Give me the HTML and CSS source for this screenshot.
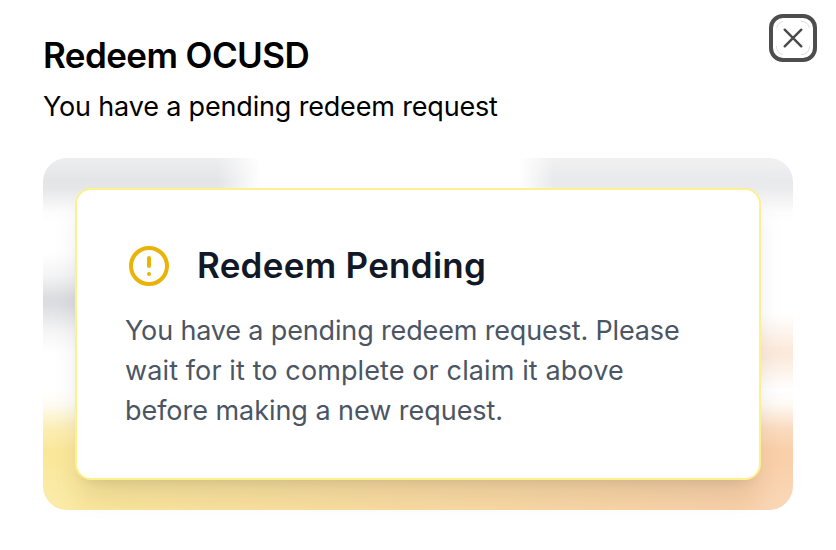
FILE: index.html
```html
<!DOCTYPE html>
<html lang="en">
<head>
<meta charset="utf-8">
<title>Redeem OCUSD</title>
<link rel="stylesheet" href="styles.css">
</head>
<body>
<main class="dialog">
  <button class="close" aria-label="Close">
    <svg width="20" height="20" viewBox="0 0 20 20" fill="none" stroke="currentColor" stroke-width="2.4" stroke-linecap="round"><path d="M1.7 1.7 18.3 18.3M18.3 1.7 1.7 18.3"/></svg>
  </button>
  <header class="header">
    <h1 class="title">Redeem OCUSD</h1>
    <p class="subtitle">You have a pending redeem request</p>
  </header>
  <section class="panel">
    <div class="backdrop">
      <div class="band band-left"></div>
      <div class="band band-right"></div>
      <div class="smudge"></div>
      <div class="peach"></div>
      <div class="action"></div>
    </div>
    <article class="card">
      <div class="card-head">
        <svg class="alert" width="48" height="48" viewBox="0 0 24 24" fill="none" stroke="currentColor" stroke-width="2" stroke-linecap="round"><circle cx="12" cy="12" r="9"/><path d="M12 8v4M12 16h.01"/></svg>
        <h2 class="card-title">Redeem Pending</h2>
      </div>
      <p class="card-text"><span class="line-a">You have a pending redeem request. Please</span><br><span class="line-b">wait for it to complete or claim it above</span><br><span class="line-c">before making a new request.</span></p>
    </article>
  </section>
</main>
</body>
</html>
```
FILE: styles.css
```css
* { box-sizing: border-box; }
body { margin: 0; background: #fff; color: #000; font-family: Inter, "Liberation Sans", sans-serif; }
h1, h2, p { margin: 0; }
.dialog { position: relative; height: 550px; padding: 35px 43px 40px; overflow: hidden; }
.close {
  position: absolute; top: 14px; right: 19px; width: 48px; height: 48px; padding: 0;
  display: grid; place-items: center; color: #4a4a4a; background: #fff;
  border: 4px solid #4d4d4d; border-radius: 14px;
}
.close svg { grid-area: 1 / 1; }
.close::before { content: ""; grid-area: 1 / 1; width: 32px; height: 32px; border: 1px solid #dedede; border-radius: 8px; clip-path: polygon(0 0, 7px 0, 7px 100%, 25px 100%, 25px 0, 100% 0, 100% 7px, 0 7px, 0 25px, 100% 25px, 100% 100%, 0 100%); }
.title { font-size: 35px; line-height: 40px; font-weight: 600; letter-spacing: -0.58px; white-space: nowrap; }
.subtitle { margin-top: 12px; font-size: 27px; line-height: 40px; letter-spacing: -0.17px; white-space: nowrap; }
.panel { display: grid; margin-top: 31px; width: 750px; height: 352px; }
.backdrop { grid-area: 1 / 1; display: grid; grid-template: 352px / 750px; overflow: hidden; border-radius: 24px; background: #fff; }
.backdrop > * { grid-area: 1 / 1; }
.band { height: 64px; background: linear-gradient(#eeeeef 0, #e4e5e7 22px, #e5e6e8 30px, #f3f3f4 44px, #fcfcfc 54px, #fff 64px); }
.band-left { width: 220px; -webkit-mask-image: linear-gradient(90deg, #000 175px, #0007 198px, transparent 218px); mask-image: linear-gradient(90deg, #000 175px, #0007 198px, transparent 218px); }
.band-right { width: 275px; justify-self: end; opacity: .8; -webkit-mask-image: linear-gradient(270deg, #000 240px, #0007 258px, transparent 275px); mask-image: linear-gradient(270deg, #000 240px, #0007 258px, transparent 275px); }
.smudge { width: 70px; height: 100px; margin-top: 95px; background: linear-gradient(#dcdde000, #dcdde04d 22%, #dcdde0 45%, #dcdde0 52%, #dcdde04d 78%, #dcdde000); }
.peach { width: 90px; height: 76px; margin-top: 156px; justify-self: end; background: linear-gradient(#fcebdd00, #fcebdd 45%, #fcebdd 58%, #fcebdd00); }
.action { height: 120px; align-self: end; background: radial-gradient(circle at 0 100%, #fff3 0, #fff0 50px), radial-gradient(circle at 100% 100%, #fff3 0, #fff0 50px), linear-gradient(90deg, #fae89a, #f9cfaa); -webkit-mask-image: linear-gradient(transparent, #0002 15px, #000b 38px, #000 60px); mask-image: linear-gradient(transparent, #0002 15px, #000b 38px, #000 60px); }
.card {
  grid-area: 1 / 1; z-index: 1; margin: 30px 32px; padding: 52px 48px; height: 292px;
  background: #fff; border: 2px solid #fdf08e; border-radius: 16px;
  box-shadow: 0 20px 30px -6px rgb(0 0 0 / .1), 0 8px 12px -8px rgb(0 0 0 / .1);
}
.card-head { display: flex; align-items: center; gap: 24px; height: 48px; }
.alert { color: #eab308; }
.card-title { color: #111827; font-size: 35px; font-weight: 600; line-height: 54px; margin-top: -2px; letter-spacing: 0.27px; white-space: nowrap; }
.card-text { margin-top: 21px; color: #4b5563; font-size: 27px; line-height: 40px; white-space: nowrap; }
.line-a { letter-spacing: -0.15px; }
.line-b { letter-spacing: 0.11px; }
.line-c { letter-spacing: -0.04px; }
```
